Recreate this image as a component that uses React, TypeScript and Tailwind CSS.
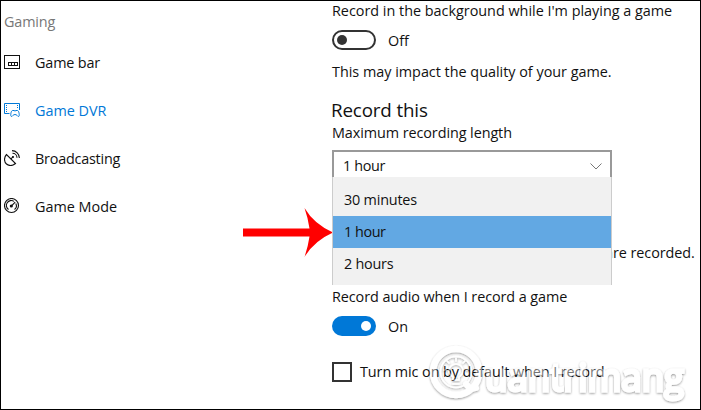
import React from "react";

const sidebarRow = "flex h-5 items-center gap-[15px]";

function GameBarIcon() {
  return (
    <svg className="h-4 w-4" viewBox="0 0 16 16" fill="none" stroke="currentColor" shapeRendering="crispEdges">
      <path d="M.5 1.5h15v13H.5zM4.500 8.500h9v3h-9zM7.500 8.500v3M10.500 8.500v3" />
    </svg>
  );
}

function GameDvrIcon() {
  return (
    <svg className="h-4 w-4" viewBox="0 0 16 16" fill="none" stroke="currentColor">
      <path d="M5.500 11.500H.5v-10h15V8" />
      <path d="M2.500 3v8M13.500 3v4" strokeDasharray="1 1" />
      <path d="M8.500 8.500h1.500q1 1 2 0h1.500c1.500 0 2.500 6 1 6-1 0-1.500-2-3.500-2s-2.500 2-3.500 2c-1.500 0-.5-6 1-6z" />
    </svg>
  );
}

function BroadcastIcon() {
  return (
    <svg className="h-4 w-4" viewBox="0 0 16 16" fill="none" stroke="currentColor" strokeWidth="1.100">
      <path d="M2.500 4.500C-.3 7.500 0 12 2.500 14c3 2.300 6.500 1.600 9-.5zM7 9l2-2.300" />
      <circle cx="9" cy="7" r=".5" />
      <path d="M8.500 3.200A4.500 4.500 0 0 1 13 7.700M8 .6A7.400 7.400 0 0 1 15.400 8" />
    </svg>
  );
}

function GameModeIcon() {
  return (
    <svg className="h-4 w-4" viewBox="0 0 16 16" fill="none" stroke="currentColor" strokeWidth="1.100">
      <circle cx="7.500" cy="7.500" r="7" />
      <path d="M4.500 11.500A4.800 4.800 0 0 1 10 3.400M11.800 5.500a4.800 4.800 0 0 1-1.300 6" />
      <circle cx="7.300" cy="8" r="1" fill="currentColor" />
      <path d="M7.500 7.800l3.700-3.700" />
    </svg>
  );
}

// Translucent white lettering whose shadow falls only outside the strokes.
function Watermark() {
  return (
    <svg className="absolute left-[420px] top-[335px] h-[74px] w-[279px]" viewBox="421 336 279 74">
      <defs>
        <filter id="soft" x="-10%" y="-20%" width="120%" height="150%">
          <feGaussianBlur in="SourceAlpha" stdDeviation="1" />
          <feOffset dx="0.300" dy="0.900" result="blurred" />
          <feFlood floodColor="#000" floodOpacity=".42" />
          <feComposite in2="blurred" operator="in" />
          <feComposite in2="SourceAlpha" operator="out" result="shadow" />
          <feComponentTransfer in="SourceGraphic" result="face">
            <feFuncA type="linear" slope=".42" />
          </feComponentTransfer>
          <feMerge>
            <feMergeNode in="shadow" />
            <feMergeNode in="face" />
          </feMerge>
        </filter>
      </defs>
      <g filter="url(#soft)" fill="none" stroke="#fff" strokeLinecap="round">
        <circle cx="456" cy="372" r="23" strokeWidth="6.500" />
        <path d="M466 384q4 6 10 4" strokeWidth="6" />
        <circle cx="456" cy="372" r="15.500" strokeWidth="1.500" />
        <path d="M453 380v-3q-4-3-4-6a7 7 0 0 1 14 0q0 3-4 6v3zM456 361v-3M449 363l-2-2M463 363l2-2M446 370h-2M466 370h2M453 384h6" strokeWidth="1.500" />
        <text x="485" y="391" fill="#fff" strokeWidth="3" textLength="199" lengthAdjust="spacingAndGlyphs" className="font-['Open_Sans',sans-serif] text-[38px]">
          uantrimang
        </text>
      </g>
    </svg>
  );
}

export default function App() {
  return (
    <div className="relative flex h-[410px] w-[701px] overflow-hidden border border-black bg-white font-['Open_Sans','Noto_Sans',sans-serif] text-[14.400px] leading-5 tracking-[-0.010px] text-[#111]">
      <aside className="flex w-[331px] shrink-0 flex-col pl-[3px] pt-[11px]">
        <div className="h-5 tracking-[-0.150px] text-[#777]">Gaming</div>
        <nav className="flex flex-col gap-7 pt-[20px]">
          <div className={sidebarRow}><GameBarIcon /><span className="relative top-px tracking-[-0.150px]">Game bar</span></div>
          <div className={sidebarRow + " text-[#0078d7]"}><GameDvrIcon /><span className="relative top-px">Game DVR</span></div>
          <div className={sidebarRow}><BroadcastIcon /><span className="relative top-px tracking-[-0.220px]">Broadcasting</span></div>
          <div className={sidebarRow}><GameModeIcon /><span className="relative top-px">Game Mode</span></div>
        </nav>
      </aside>

      <main className="flex grow flex-col whitespace-nowrap">
        <p className="h-5">Record in the background while I'm playing a game</p>
        <div className="mt-[9px] flex h-5 items-center gap-3">
          <span className="flex h-5 w-11 items-center rounded-full border-2 border-[#333] pl-[3px]"><i className="h-[10px] w-[10px] rounded-full bg-[#333]" /></span>
          <span className="pt-0.5">Off</span>
        </div>
        <p className="mt-[12px] h-5">This may impact the quality of your game.</p>
        <h2 className="-ml-px mt-[16px] h-6 text-[18.800px] leading-6 tracking-[-0.150px]">Record this</h2>
        <p className="mt-px h-5 tracking-[-0.080px]">Maximum recording length</p>
        <div className="relative mt-[7px] h-8 w-[280px]">
          <div className="flex h-8 items-center justify-between border-2 border-[#999] pl-[9px] pr-2">
            <span className="tracking-[-0.350px]">1 hour</span>
            <svg className="h-[7px] w-3" viewBox="0 0 12 7" fill="none" stroke="#777"><path d="M.5.5L6 6l5.500-5.500" /></svg>
          </div>
          <ul className="absolute left-0 top-[27px] z-10 h-[108px] w-[280px] border-x border-[#ccc] bg-[#f1f1f1] pt-[7px]">
            <li className="h-8 px-[11px] leading-8 tracking-[-0.200px]">30 minutes</li>
            <li className="h-8 bg-[#62a8e3] px-[11px] leading-8 tracking-[-0.450px]">1 hour</li>
            <li className="h-8 px-[11px] leading-8 tracking-[-0.250px]">2 hours</li>
          </ul>
        </div>
        <p className="mt-[61px] h-5 pl-[273px] tracking-[-0.060px]">are recorded.</p>
        <p className="mt-[24px] h-5 tracking-[-0.080px]">Record audio when I record a game</p>
        <div className="mt-[9px] flex h-5 items-center gap-3">
          <span className="flex h-5 w-11 items-center justify-end rounded-full bg-[#0078d7] pr-[5px]"><i className="h-[10px] w-[10px] rounded-full bg-white" /></span>
          <span className="pt-0.5">On</span>
        </div>
        <div className="mt-[26px] flex h-5 items-center gap-2">
          <span className="h-5 w-5 border-2 border-[#333]" />
          <span className="tracking-[-0.080px]">Turn mic on by default when I record</span>
        </div>
      </main>

      <svg className="absolute left-[242px] top-[207px] h-[50px] w-[90px]" viewBox="0 0 90 50">
        <path d="M0 20.500H66.500Q65 10 61.500 0Q71 16 90 24.500Q71 33 61.500 49Q65 39 66.500 28.500H0z" fill="#f00" />
      </svg>
      <Watermark />
    </div>
  );
}
